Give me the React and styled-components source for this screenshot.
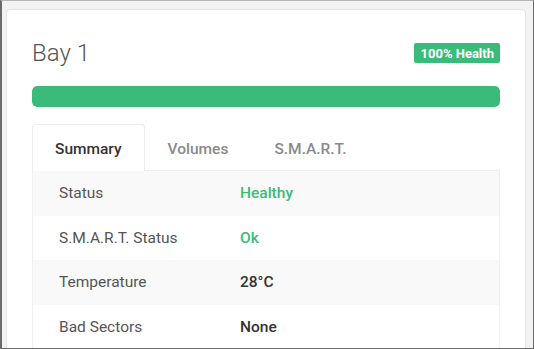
import React, { useState } from 'react';
import styled, { createGlobalStyle } from 'styled-components';

const GlobalStyle = createGlobalStyle`
  html, body {
    margin: 0;
    padding: 0;
    background: #f2f2f2;
  }
  body {
    font-family: Roboto, "Liberation Sans", Arial, sans-serif;
  }
`;

const green = '#3bbb79';

const Frame = styled.div`
  box-sizing: border-box;
  width: 534px;
  height: 349px;
  overflow: hidden;
  background: #f2f2f2;
  border: 1px solid #6b6b6b;
  border-top-color: #b5b5b5;
  border-left-width: 2px;
  padding: 8px 7px 0 4px;
`;

const Card = styled.div`
  background: #fff;
  border: 1px solid #e4e4e4;
  border-radius: 4px;
  padding: 29px 25px 0 25px;
  min-height: 400px;
`;

const Header = styled.div`
  display: flex;
  align-items: center;
  justify-content: space-between;
  height: 28px;
`;

const Title = styled.h2`
  margin: 0;
  font-size: 24px;
  line-height: 28px;
  font-weight: 300;
  color: #555;
`;

const Badge = styled.span`
  display: inline-flex;
  align-items: center;
  height: 20px;
  padding: 0 6px;
  border-radius: 2px;
  background: ${green};
  color: #fff;
  font-size: 13px;
  font-weight: 700;
`;

const Progress = styled.div`
  margin-top: 19px;
  height: 21px;
  border-radius: 5px;
  background: #eee;
  overflow: hidden;
`;

const ProgressFill = styled.div`
  height: 100%;
  background: ${green};
  border-radius: 5px;
`;

const Tabs = styled.div`
  display: flex;
  margin-top: 17px;
`;

const Tab = styled.button`
  height: 47px;
  padding: 1px 22px 0;
  margin-bottom: -1px;
  font-family: inherit;
  font-size: 15.5px;
  font-weight: 500;
  color: ${p => (p.$active ? '#333' : '#8a8a8a')};
  background: ${p => (p.$active ? '#fff' : 'transparent')};
  border: 1px solid ${p => (p.$active ? '#ececec' : 'transparent')};
  border-bottom: none;
  border-radius: 4px 4px 0 0;
  cursor: pointer;
  position: relative;
  z-index: 1;
`;

const Panel = styled.div`
  border: 1px solid #efefef;
  border-bottom: none;
`;

const Row = styled.div`
  display: grid;
  grid-template-columns: 181px 1fr;
  align-items: center;
  height: 44.5px;
  padding-left: 26px;
  background: ${p => (p.$striped ? '#f9f9f9' : '#fff')};
  font-size: 15.5px;
`;

const Label = styled.span`
  color: #555;
`;

const Value = styled.span`
  color: ${p => (p.$ok ? green : '#333')};
  font-weight: 500;
`;

const rows = [
  { label: 'Status', value: 'Healthy', ok: true },
  { label: 'S.M.A.R.T. Status', value: 'Ok', ok: true },
  { label: 'Temperature', value: '28°C' },
  { label: 'Bad Sectors', value: 'None' },
];

export default function App() {
  const [tab, setTab] = useState('Summary');
  const health = 100;

  return (
    <>
      <GlobalStyle />
      <Frame>
        <Card>
          <Header>
            <Title>Bay 1</Title>
            <Badge>{health}% Health</Badge>
          </Header>
          <Progress>
            <ProgressFill style={{ width: `${health}%` }} />
          </Progress>
          <Tabs>
            {['Summary', 'Volumes', 'S.M.A.R.T.'].map(t => (
              <Tab key={t} $active={tab === t} onClick={() => setTab(t)}>
                {t}
              </Tab>
            ))}
          </Tabs>
          <Panel>
            {rows.map((r, i) => (
              <Row key={r.label} $striped={i % 2 === 0}>
                <Label>{r.label}</Label>
                <Value $ok={r.ok}>{r.value}</Value>
              </Row>
            ))}
          </Panel>
        </Card>
      </Frame>
    </>
  );
}
